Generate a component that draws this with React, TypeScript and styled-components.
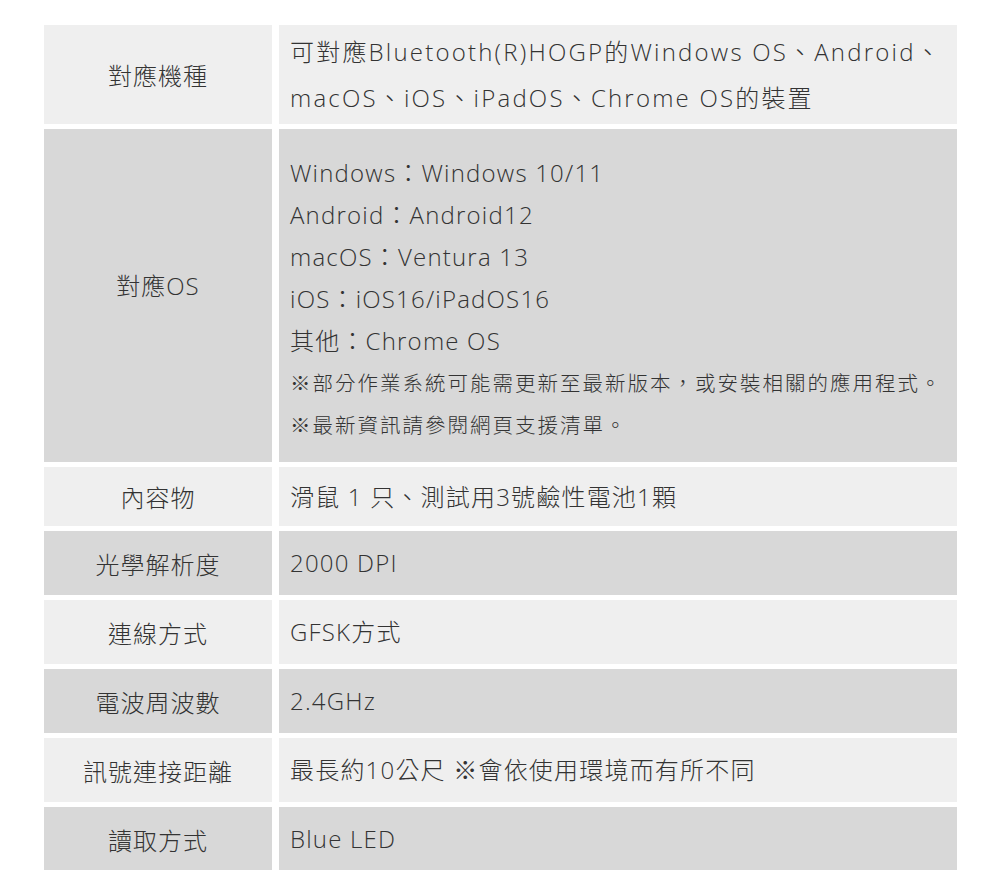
import styled, { createGlobalStyle } from "styled-components";

const GlobalStyle = createGlobalStyle`
  html, body {
    margin: 0;
    padding: 0;
    background: #fff;
  }
  body {
    font-family: "Open Sans", "Noto Sans CJK TC", sans-serif;
    color: #333;
  }
`;

const SpecTable = styled.div`
  display: grid;
  grid-template-columns: 228px 678px;
  column-gap: 7px;
  row-gap: 5px;
  padding: 25px 0 0 44px;
`;

const LabelCell = styled.div<{ $shade: "light" | "dark"; $lift?: number }>`
  background: ${(p) => (p.$shade === "light" ? "#efefef" : "#d8d8d8")};
  display: flex;
  align-items: center;
  justify-content: center;
  padding-bottom: ${(p) => p.$lift ?? 0}px;
  font-size: 24px;
  font-weight: 300;
  letter-spacing: 1px;
  color: #333;
`;

const ValueCell = styled.div<{
  $shade: "light" | "dark";
  $pad?: string;
  $lh?: number;
  $ls?: number;
}>`
  background: ${(p) => (p.$shade === "light" ? "#efefef" : "#d8d8d8")};
  padding: ${(p) => p.$pad ?? "11px 11px"};
  font-size: 24px;
  font-weight: 300;
  line-height: ${(p) => p.$lh ?? 42}px;
  letter-spacing: ${(p) => p.$ls ?? 1.2}px;
  color: #333;
  white-space: nowrap;
`;

const Line = styled.div``;

const Note = styled.div`
  font-size: 20.5px;
  letter-spacing: 2px;
`;

type Row = { label: string; value: string; pad?: string };

const rows: Row[] = [
  { label: "內容物", value: "滑鼠 1 只、測試用3號鹼性電池1顆", pad: "8.5px 11px" },
  { label: "光學解析度", value: "2000 DPI" },
  { label: "連線方式", value: "GFSK方式" },
  { label: "電波周波數", value: "2.4GHz" },
  { label: "訊號連接距離", value: "最長約10公尺 ※會依使用環境而有所不同" },
  { label: "讀取方式", value: "Blue LED" },
];

export default function App() {
  return (
    <>
      <GlobalStyle />
      <SpecTable>
        <LabelCell $shade="light">對應機種</LabelCell>
        <ValueCell $shade="light" $pad="3.5px 11px" $lh={46} $ls={2.2}>
          <Line>可對應Bluetooth(R)HOGP的Windows OS、Android、</Line>
          <Line>macOS、iOS、iPadOS、Chrome OS的裝置</Line>
        </ValueCell>

        <LabelCell $shade="dark" $lift={22}>
          對應OS
        </LabelCell>
        <ValueCell $shade="dark" $pad="23px 11px 16px">
          <Line>Windows：Windows 10/11</Line>
          <Line>Android：Android12</Line>
          <Line>macOS：Ventura 13</Line>
          <Line>iOS：iOS16/iPadOS16</Line>
          <Line>其他：Chrome OS</Line>
          <Note>※部分作業系統可能需更新至最新版本，或安裝相關的應用程式。</Note>
          <Note>※最新資訊請參閱網頁支援清單。</Note>
        </ValueCell>

        {rows.map((r, i) => {
          const shade = i % 2 === 0 ? "light" : "dark";
          return [
            <LabelCell key={r.label + "-l"} $shade={shade}>
              {r.label}
            </LabelCell>,
            <ValueCell key={r.label + "-v"} $shade={shade} $pad={r.pad}>
              {r.value}
            </ValueCell>,
          ];
        })}
      </SpecTable>
    </>
  );
}
